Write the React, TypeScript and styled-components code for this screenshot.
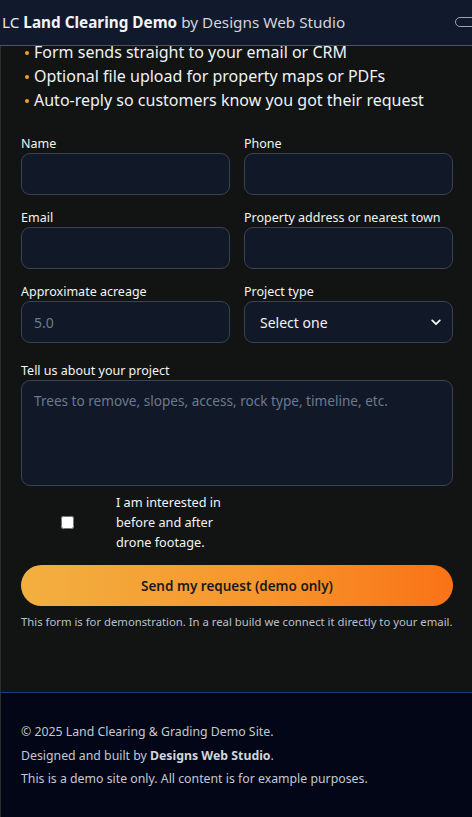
import React from 'react';
import styled, { createGlobalStyle } from 'styled-components';

const GlobalStyle = createGlobalStyle`
  * { box-sizing: border-box; }
  html, body {
    margin: 0;
    padding: 0;
    background: #111413;
    font-family: 'Noto Sans', 'Open Sans', sans-serif;
    overflow: hidden;
  }
`;

const features = [
  'Form sends straight to your email or CRM',
  'Optional file upload for property maps or PDFs',
  'Auto-reply so customers know you got their request',
];

export default function App() {
  return (
    <>
      <GlobalStyle />
      <Page>
        <Header>
          <Brand>
            LC <strong>Land Clearing Demo</strong> <span>by Designs Web Studio</span>
          </Brand>
          <MenuPill aria-label="Menu" />
        </Header>

        <Main>
          <FeatureList>
            {features.map((f) => (
              <li key={f}>{f}</li>
            ))}
          </FeatureList>

          <Form onSubmit={(e) => e.preventDefault()}>
            <Grid>
              <Field>
                <Label>Name</Label>
                <Input type="text" />
              </Field>
              <Field>
                <Label>Phone</Label>
                <Input type="tel" />
              </Field>
              <Field>
                <Label>Email</Label>
                <Input type="email" />
              </Field>
              <Field>
                <Label>Property address or nearest town</Label>
                <Input type="text" />
              </Field>
              <Field>
                <Label>Approximate acreage</Label>
                <Input type="text" placeholder="5.0" />
              </Field>
              <Field>
                <Label>Project type</Label>
                <SelectWrap>
                  <Select defaultValue="">
                    <option value="">Select one</option>
                    <option>Lot clearing</option>
                    <option>Grading</option>
                  </Select>
                  <Chevron viewBox="0 0 12 8" aria-hidden>
                    <path d="M1.5 1.5 6 6l4.5-4.5" fill="none" stroke="#f3f4f6" strokeWidth="2.2" strokeLinecap="round" strokeLinejoin="round" />
                  </Chevron>
                </SelectWrap>
              </Field>
            </Grid>

            <Field $offset={1}>
              <Label>Tell us about your project</Label>
              <TextArea placeholder="Trees to remove, slopes, access, rock type, timeline, etc." />
            </Field>

            <CheckRow>
              <CheckBox type="checkbox" />
              <CheckText>I am interested in before and after drone footage.</CheckText>
            </CheckRow>

            <SubmitButton type="submit">Send my request (demo only)</SubmitButton>
            <Note>This form is for demonstration. In a real build we connect it directly to your email.</Note>
          </Form>
        </Main>

        <Footer>
          <FooterLine>© 2025 Land Clearing &amp; Grading Demo Site.</FooterLine>
          <FooterLine>
            Designed and built by <strong>Designs Web Studio</strong>.
          </FooterLine>
          <FooterLine>This is a demo site only. All content is for example purposes.</FooterLine>
        </Footer>
      </Page>
    </>
  );
}

// ===== Styles =====

const Page = styled.div`
  width: 472px;
  min-height: 817px;
  display: flex;
  flex-direction: column;
  background: #111413;
`;

const Header = styled.header`
  height: 46px;
  display: flex;
  align-items: center;
  justify-content: space-between;
  padding-left: 2px;
  padding-bottom: 2px;
  background: #111a2c;
  border-bottom: 1px solid #4b5563;
  overflow: hidden;
`;

const Brand = styled.div`
  font-size: 15.3px;
  color: #e5e7eb;
  white-space: nowrap;

  strong {
    font-weight: 700;
    color: #f3f4f6;
  }

  span {
    color: #d1d5db;
  }
`;

const MenuPill = styled.button`
  width: 30px;
  height: 10px;
  margin-right: -13px;
  border: 1px solid #9ca3af;
  border-radius: 999px;
  background: transparent;
  padding: 0;
  flex-shrink: 0;
`;

const Main = styled.main`
  flex: 1;
  border-left: 1px solid #2a2e2e;
  padding: 0 19px 52px 20px;
`;

const FeatureList = styled.ul`
  margin: -6px 0 0;
  padding: 0 0 0 13px;
  list-style: none;

  li {
    position: relative;
    font-size: 16px;
    line-height: 24px;
    color: #eef2f7;
  }

  li::before {
    content: '';
    position: absolute;
    left: -9px;
    top: 11px;
    width: 4px;
    height: 4px;
    border-radius: 50%;
    background: #f59e2a;
  }
`;

const Form = styled.form`
  margin-top: 23px;
  display: flex;
  flex-direction: column;
  gap: 18px;
`;

const Grid = styled.div`
  display: grid;
  grid-template-columns: 1fr 1fr;
  column-gap: 14px;
  row-gap: 14px;
`;

const Field = styled.label<{ $offset?: number }>`
  display: flex;
  flex-direction: column;
  gap: 1px;
  margin-top: ${(p) => p.$offset ?? 0}px;
`;

const Label = styled.span`
  font-size: 12.5px;
  line-height: 17px;
  color: #f3f4f6;
`;

const controlBase = `
  width: 100%;
  background: #111827;
  border: 1px solid #3b4252;
  border-radius: 9px;
  color: #f3f4f6;
  font-family: 'Noto Sans', 'Open Sans', sans-serif;
  outline: none;
`;

const Input = styled.input`
  ${controlBase}
  height: 42px;
  padding: 0 12px;
  font-size: 14px;

  &::placeholder {
    color: #6b7a90;
  }
`;

const SelectWrap = styled.div`
  position: relative;
`;

const Select = styled.select`
  ${controlBase}
  height: 42px;
  padding: 0 15px;
  font-size: 14px;
  appearance: none;
`;

const Chevron = styled.svg`
  position: absolute;
  right: 12px;
  top: 18px;
  width: 10px;
  height: 7px;
  pointer-events: none;
`;

const TextArea = styled.textarea`
  ${controlBase}
  height: 106px;
  padding: 10px 12px;
  font-size: 13.6px;
  line-height: 20px;
  resize: none;

  &::placeholder {
    color: #6b7a90;
  }
`;

const CheckRow = styled.label`
  display: grid;
  grid-template-columns: 95px 110px;
  align-items: center;
  margin-top: -12px;
`;

const CheckBox = styled.input`
  justify-self: center;
  width: 13px;
  height: 13px;
  margin: 0 3px 0 0;
`;

const CheckText = styled.span`
  font-size: 12.7px;
  line-height: 20px;
  color: #f3f4f6;
`;

const SubmitButton = styled.button`
  height: 41px;
  margin-top: -5px;
  border: none;
  border-radius: 999px;
  background: linear-gradient(90deg, #f2b040 0%, #f7962d 55%, #f97316 100%);
  color: #1a1a1a;
  font-family: 'Noto Sans', 'Open Sans', sans-serif;
  font-size: 13.5px;
  font-weight: 600;
  cursor: pointer;
`;

const Note = styled.p`
  margin: -10px 0 0;
  font-size: 11.3px;
  line-height: 16px;
  color: #b8c0cc;
`;

const Footer = styled.footer`
  background: #020617;
  border-top: 1px solid #1e3a8a;
  border-left: 1px solid #2a2e2e;
  padding: 29px 20px 28px;
  display: flex;
  flex-direction: column;
  gap: 3.5px;
`;

const FooterLine = styled.p`
  margin: 0;
  font-size: 12.3px;
  line-height: 20px;
  color: #c3c9d3;

  strong {
    font-weight: 700;
    color: #d1d5db;
  }
`;
